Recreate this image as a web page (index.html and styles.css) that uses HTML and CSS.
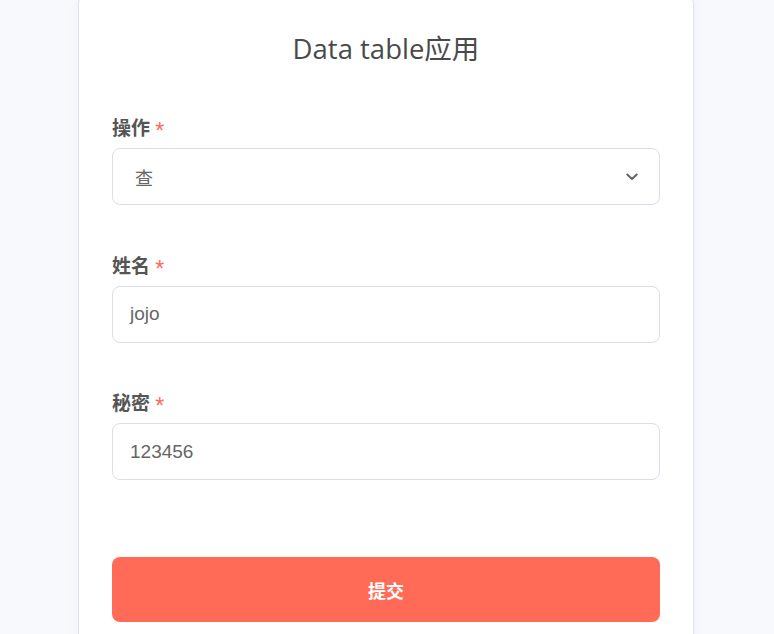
FILE: index.html
```html
<!DOCTYPE html>
<html lang="zh">
<head>
<meta charset="utf-8">
<title>Data table应用</title>
<link rel="stylesheet" href="styles.css">
</head>
<body>
<main class="card">
  <h1 class="title">Data table应用</h1>
  <form class="form">
    <div class="group">
      <label class="label">操作 <span class="req">*</span></label>
      <div class="select">
        <span class="value">查</span>
        <svg class="chev" width="12" height="8" viewBox="0 0 12 8"><path d="M1.3 1.5 L6 6 L10.7 1.5" fill="none" stroke="#666" stroke-width="2" stroke-linecap="round" stroke-linejoin="round"/></svg>
      </div>
    </div>
    <div class="group">
      <label class="label">姓名 <span class="req">*</span></label>
      <div class="input">jojo</div>
    </div>
    <div class="group">
      <label class="label">秘密 <span class="req">*</span></label>
      <div class="input">123456</div>
    </div>
    <button type="button" class="submit">提交</button>
  </form>
</main>
</body>
</html>
```
FILE: styles.css
```css
html, body {
  margin: 0;
  height: 100%;
}
body {
  background: #f8f9fd;
  display: flex;
  justify-content: center;
  align-items: flex-start;
  padding-right: 2px;
  font-family: "Open Sans", "Noto Sans CJK SC", sans-serif;
  overflow: hidden;
}
.card {
  width: 616px;
  box-sizing: border-box;
  margin-top: -8px;
  background: #fff;
  border: 1px solid #e1e3ef;
  border-radius: 12px;
  box-shadow: 0 2px 10px rgba(120, 130, 180, 0.08);
  padding: 38px 33px 40px;
  min-height: 700px;
}
.title {
  margin: 0;
  text-align: center;
  font-weight: 400;
  font-size: 27.5px;
  line-height: 36px;
  color: #4a4a4a;
}
.form {
  margin-top: 47px;
  display: flex;
  flex-direction: column;
}
.group {
  display: flex;
  flex-direction: column;
  margin-bottom: 46.5px;
}
.label {
  display: block;
  height: 26px;
  overflow: visible;
  font-family: "Noto Sans CJK SC", sans-serif;
  font-weight: 700;
  font-size: 19px;
  line-height: 26px;
  color: #555;
  margin-bottom: 8px;
}
.req {
  color: #ff6b5b;
  font-family: "Liberation Sans", sans-serif;
  font-weight: 400;
  font-size: 23px;
  margin-left: 1px;
  vertical-align: -4px;
  line-height: 1;
}
.select, .input {
  box-sizing: border-box;
  height: 57px;
  border: 1px solid #dcdde9;
  border-radius: 8px;
  display: flex;
  align-items: center;
  padding: 0 17px;
  font-family: "Liberation Sans", "Noto Sans CJK SC", sans-serif;
  font-size: 19px;
  color: #666;
}
.select {
  justify-content: space-between;
  padding: 0 21px 0 22px;
}
.select .value {
  font-family: "Noto Sans CJK SC", sans-serif;
  font-size: 18px;
}
.submit {
  margin-top: 30.5px;
  height: 65px;
  border: none;
  border-radius: 8px;
  background: #ff6b57;
  color: #fff;
  font-family: "Noto Sans CJK SC", sans-serif;
  font-weight: 700;
  font-size: 18px;
}
```
